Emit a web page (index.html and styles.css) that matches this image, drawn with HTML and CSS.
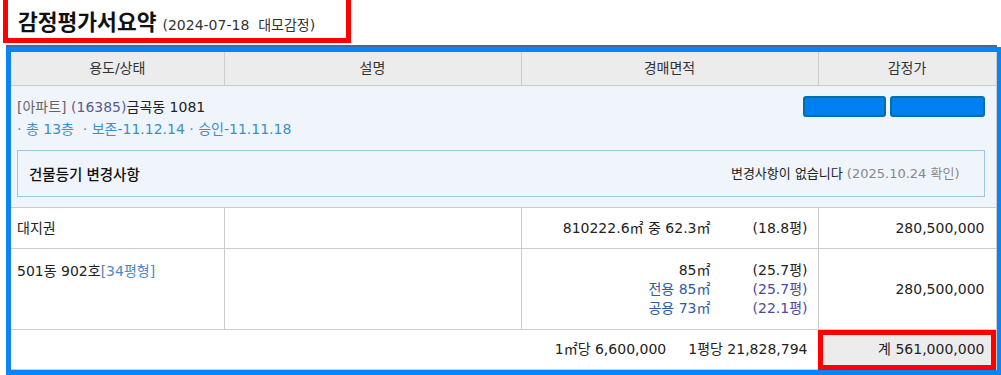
FILE: index.html
```html
<!DOCTYPE html>
<html lang="ko">
<head>
<meta charset="utf-8">
<link rel="stylesheet" href="styles.css">
</head>
<body>
<div class="title-box">
  <h2 class="title">감정평가서요약<span class="title-sub">(2024-07-18&nbsp; 대모감정)</span></h2>
</div>
<div class="section">
  <div class="frame">
    <table class="summary">
      <colgroup>
        <col class="c1"><col class="c2"><col class="c3"><col class="c4">
      </colgroup>
      <thead>
        <tr><th>용도/상태</th><th>설명</th><th>경매면적</th><th>감정가</th></tr>
      </thead>
      <tbody>
        <tr class="info-row">
          <td colspan="4">
            <div class="info-top">
              <div class="info-text">
                <div class="addr"><span class="kind">[아파트]</span> <span class="zip">(16385)</span>금곡동 1081</div>
                <div class="meta">· 총 13층 &nbsp;· 보존-11.12.14 · 승인-11.11.18</div>
              </div>
              <div class="btns"><span class="btn b1"></span><span class="btn b2"></span></div>
            </div>
            <div class="reg-box">
              <span class="reg-title">건물등기 변경사항</span>
              <span class="reg-status">변경사항이 없습니다 <span class="reg-date">(2025.10.24 확인)</span></span>
            </div>
          </td>
        </tr>
        <tr class="row-land">
          <td>대지권</td>
          <td></td>
          <td><div class="area"><span class="a">810222.6㎡ 중 62.3㎡</span><span class="p">(18.8평)</span></div></td>
          <td class="price">280,500,000</td>
        </tr>
        <tr class="row-unit">
          <td class="unit-name"><div class="unit-label">501동 902호<span class="type">[34평형]</span></div></td>
          <td></td>
          <td>
            <div class="area"><span class="a">85㎡</span><span class="p">(25.7평)</span></div>
            <div class="area sub"><span class="a">전용 85㎡</span><span class="p">(25.7평)</span></div>
            <div class="area sub"><span class="a">공용 73㎡</span><span class="p">(22.1평)</span></div>
          </td>
          <td class="price">280,500,000</td>
        </tr>
        <tr class="row-total">
          <td colspan="3" class="unit-prices"><span>1㎡당 6,600,000</span><span class="pp">1평당 21,828,794</span></td>
          <td class="price total">계 561,000,000</td>
        </tr>
      </tbody>
    </table>
  </div>
</div>
</body>
</html>
```
FILE: styles.css
```css
html, body {
  margin: 0;
  padding: 0;
  background: #fff;
}
body {
  font-family: "DejaVu Sans", "Noto Sans CJK KR", sans-serif;
  color: #222;
  font-size: 14px;
  width: 1001px;
  height: 375px;
  overflow: hidden;
}
.title-box {
  margin-left: 3px;
  width: 338px;
  height: 33px;
  border: 5px solid #ff0000;
  border-top-width: 0;
  padding-top: 5px;
  box-sizing: content-box;
}
.title {
  margin: 0;
  padding-left: 10px;
  font-family: "Noto Sans CJK KR", sans-serif;
  font-size: 21.5px;
  font-weight: bold;
  line-height: 32px;
  color: #111;
  white-space: nowrap;
}
.title-sub {
  font-family: "DejaVu Sans", "Noto Sans CJK KR", sans-serif;
  font-size: 14px;
  font-weight: normal;
  color: #333;
  margin-left: 6px;
}
.section {
  margin-top: 2px;
  margin-left: 6px;
  width: 991px;
  border-top: 2px solid #3a6b9c;
}
.frame {
  width: 985px;
  border: 5px solid #0a84f5;
}
.summary {
  width: 985px;
  border-collapse: collapse;
  table-layout: fixed;
}
.c1 { width: 213px; }
.c2 { width: 297px; }
.c3 { width: 297px; }
.c4 { width: 178px; }
.summary th, .summary td {
  border: 1px solid #cccccc;
  padding: 0;
  line-height: 19px;
}
.summary tr:first-child th { border-top: 0; }
.summary th:first-child, .summary td:first-child { border-left: 0; }
.summary th {
  background: #ececec;
  height: 33px;
  font-weight: normal;
  color: #333;
  text-align: center;
}
.info-row td {
  background: #f0f5fc;
  padding: 10px 11px 10px 6px;
}
.info-top {
  display: flex;
  justify-content: space-between;
  align-items: flex-start;
}
.addr { line-height: 22px; }
.kind { color: #666; }
.zip { color: #5b5b8f; }
.meta {
  color: #3d8fc7;
  line-height: 22px;
}
.btns {
  display: flex;
  gap: 4px;
  margin-top: 0;
}
.btn {
  display: block;
  height: 17px;
  background: #0080f0;
  border: 2px solid #0070ad;
  border-radius: 3px;
}
.b1 { width: 79px; }
.b2 { width: 91px; }
.reg-box {
  margin-top: 10px;
  height: 45px;
  border: 1px solid #9cc6df;
  display: flex;
  align-items: center;
  justify-content: space-between;
  padding: 0 24px 0 11px;
}
.reg-title {
  font-family: "Noto Sans CJK KR", sans-serif;
  font-weight: 500;
  font-size: 14.5px;
  color: #111;
}
.reg-status {
  font-size: 13px;
  color: #222;
}
.reg-date { color: #888; }
.row-land td {
  height: 40px;
  padding-left: 6px;
}
.row-unit td {
  height: 80px;
  padding-left: 6px;
}
.summary td.unit-name { vertical-align: top; }
.unit-label { margin-top: 13px; }
.type { color: #4a8ac8; }
.area {
  display: flex;
  justify-content: flex-end;
  padding-right: 10px;
}
.area .p {
  width: 97px;
  text-align: right;
}
.area.sub { color: #2a5ea8; }
.area.sub .p { color: #4a4aa0; }
.price {
  text-align: right;
  padding-right: 11px !important;
}
.row-total td { height: 39px; }
.unit-prices {
  text-align: right;
  padding-right: 10px !important;
}
.unit-prices .pp { margin-left: 22px; }
.total {
  background: #ececec;
  outline: 5px solid #ff0000;
  outline-offset: -5px;
}
```
